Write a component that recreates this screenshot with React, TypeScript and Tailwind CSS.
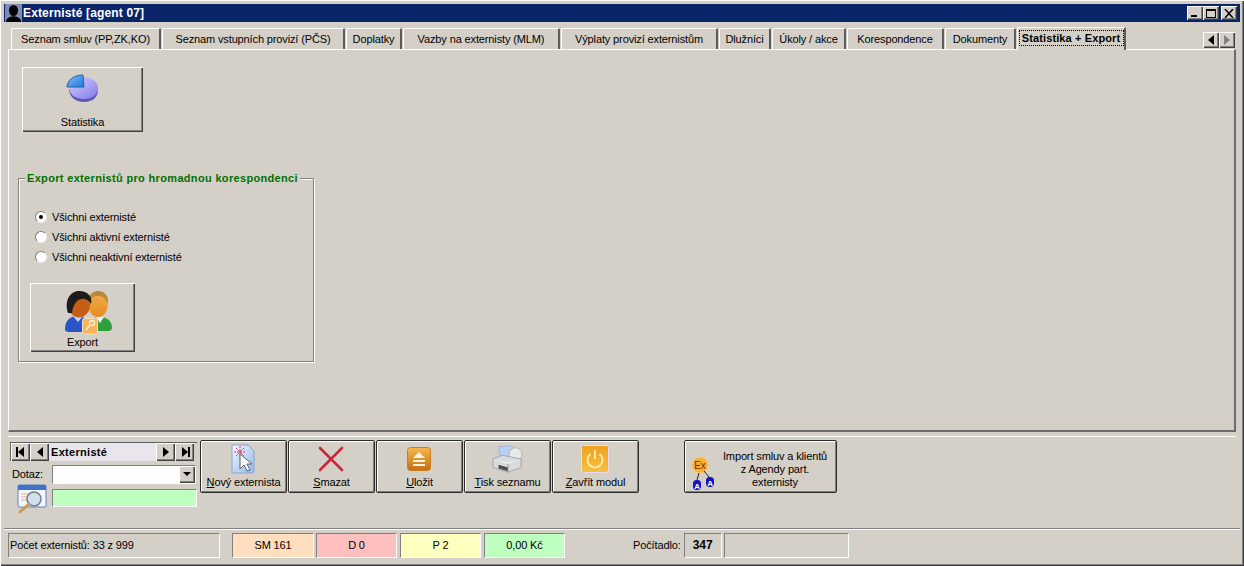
import React from 'react';

const tabs = [
  { label: 'Seznam smluv (PP,ZK,KO)', width: 150 },
  { label: 'Seznam vstupních provizí (PČS)', width: 183 },
  { label: 'Doplatky', width: 56 },
  { label: 'Vazby na externisty (MLM)', width: 157 },
  { label: 'Výplaty provizí externistům', width: 157 },
  { label: 'Dlužníci', width: 52 },
  { label: 'Úkoly / akce', width: 74 },
  { label: 'Korespondence', width: 97 },
  { label: 'Dokumenty', width: 71 },
];

const raised = 'shadow-[inset_1px_1px_0_#ffffff,inset_-1px_-1px_0_#404040,inset_-2px_-2px_0_#808080]';
const sunken = 'border border-t-[#808080] border-l-[#808080] border-b-white border-r-white';

function PieIcon() {
  return (
    <svg width="34" height="30" viewBox="0 0 34 30">
      <defs>
        <linearGradient id="pieA" x1="0" y1="0" x2="1" y2="1">
          <stop offset="0" stopColor="#d8d4ff" />
          <stop offset="1" stopColor="#7f78ea" />
        </linearGradient>
        <linearGradient id="pieB" x1="0" y1="0" x2="1" y2="1">
          <stop offset="0" stopColor="#7cc4f8" />
          <stop offset="1" stopColor="#1f74d8" />
        </linearGradient>
      </defs>
      <path d="M3 15c0 7 6 13 15 13s14-5 14-12c0-7-6-12-14-12l-1 11z" fill="#5c5ab0" />
      <path d="M3 13c0 7 6 12 15 12s14-5 14-11c0-6-6-11-14-11l-2 10z" fill="url(#pieA)" />
      <path d="M1 13C1 7 7 1 17 1l1 12z" fill="url(#pieB)" stroke="#2a5fa8" strokeWidth="1" />
    </svg>
  );
}

function UsersIcon() {
  return (
    <svg width="50" height="44" viewBox="0 0 50 44">
      <defs>
        <linearGradient id="faceA" x1="0" y1="0" x2="0" y2="1">
          <stop offset="0" stopColor="#f0b050" />
          <stop offset="1" stopColor="#e88a20" />
        </linearGradient>
      </defs>
      <path d="M24 38c0-8 4-12 12-12s12 5 12 11c0 2-2 3-4 3H28z" fill="#2f9e3c" />
      <path d="M32 26l4 6 4-6z" fill="#f2f2f2" />
      <ellipse cx="34" cy="13" rx="10" ry="13" fill="url(#faceA)" />
      <path d="M24 13C23 5 28 0 34 0s11 4 10 13c-2-6-6-8-10-8s-8 2-10 8z" fill="#b88a3a" />
      <path d="M1 38c0-8 5-13 12-13s14 5 14 12c0 3-2 4-5 4H5c-3 0-4-1-4-3z" fill="#2a55c8" />
      <path d="M9 25l5 6 5-6z" fill="#c8d8f8" />
      <ellipse cx="15" cy="14" rx="11" ry="12.5" fill="#c45e14" />
      <path d="M4 22C0 10 6 0 15 0s14 6 12 13c-2-4-6-6-10-5-4 1-8 5-9 14z" fill="#1c1c1c" />
      <rect x="18.5" y="27.5" width="15" height="15.5" rx="2" fill="#f6b45c" stroke="#fbe0b8" />
      <circle cx="28" cy="32" r="2.5" fill="none" stroke="#fff3dc" strokeWidth="1.3" />
      <path d="M26 34l-4 5" stroke="#fff3dc" strokeWidth="1.3" />
    </svg>
  );
}

function NewIcon() {
  return (
    <svg width="26" height="32" viewBox="0 0 26 30">
      <defs>
        <linearGradient id="docA" x1="0" y1="0" x2="1" y2="1">
          <stop offset="0" stopColor="#f4f8ff" />
          <stop offset="1" stopColor="#90b8ee" />
        </linearGradient>
      </defs>
      <path d="M2 1h16l6 6v20c0 1-1 2-2 2H2z" fill="url(#docA)" stroke="#86a4d4" />
      <path d="M10 2v12M4 8h12M6 4l8 8M14 4l-8 8" stroke="#d8365a" strokeWidth="1" strokeDasharray="2 1" />
      <path d="M10 10v15l4-4 3 6 3-1-3-6h5z" fill="#ffffff" stroke="#55606e" strokeWidth="1" />
    </svg>
  );
}

function DeleteIcon() {
  return (
    <svg width="26" height="26" viewBox="0 0 26 26">
      <path d="M2 2l22 22M24 2L2 24" stroke="#c8283c" strokeWidth="2.6" strokeLinecap="round" />
    </svg>
  );
}

function SaveIcon() {
  return (
    <svg width="24" height="24" viewBox="0 0 24 24">
      <defs>
        <linearGradient id="saveA" x1="0" y1="0" x2="0" y2="1">
          <stop offset="0" stopColor="#f6b850" />
          <stop offset="1" stopColor="#c86c14" />
        </linearGradient>
      </defs>
      <rect x="0.5" y="0.5" width="23" height="23" rx="3" fill="url(#saveA)" stroke="#c8801e" />
      <path d="M12 5l6 6H6z" fill="#fff4e0" />
      <rect x="6" y="13" width="12" height="2" fill="#fff4e0" />
      <rect x="6" y="17" width="12" height="2" fill="#fff4e0" />
    </svg>
  );
}

function PrinterIcon() {
  return (
    <svg width="32" height="30" viewBox="0 0 34 30">
      <path d="M8 2l14-1 4 12-16 1z" fill="#b8d0f4" stroke="#8ca4c8" strokeWidth="0.6" />
      <circle cx="26" cy="10" r="7" fill="#e8e8e8" stroke="#b0b0b0" />
      <path d="M2 15l10-4 20 4v9l-14 5-16-5z" fill="#d8dadc" stroke="#8c8e92" strokeWidth="0.7" />
      <path d="M2 15l16 5 14-5-14 4z" fill="#ffffff" />
      <path d="M8 21l10 3v4l-10-3z" fill="#4c4e52" />
      <path d="M18 20v9" stroke="#8c8e92" />
    </svg>
  );
}

function PowerIcon() {
  return (
    <svg width="28" height="28" viewBox="0 0 28 28">
      <defs>
        <linearGradient id="powerA" x1="0" y1="0" x2="0" y2="1">
          <stop offset="0" stopColor="#f0a020" />
          <stop offset="1" stopColor="#f8c040" />
        </linearGradient>
      </defs>
      <rect x="0.5" y="0.5" width="27" height="27" rx="2" fill="url(#powerA)" stroke="#e8dcf0" />
      <path d="M9.5 9a7.5 7.5 0 1 0 9 0" fill="none" stroke="#ffe9a8" strokeWidth="2" />
      <path d="M14 5v9" stroke="#ffe9a8" strokeWidth="2" />
    </svg>
  );
}

function ImportIcon() {
  return (
    <svg width="26" height="34" viewBox="0 0 26 34" className="font-['Liberation_Sans',sans-serif]">
      <circle cx="10" cy="9" r="8" fill="#f6b030" stroke="#f8cc80" />
      <text x="10" y="13" textAnchor="middle" fontSize="10" fill="#8c1c10">Ex</text>
      <path d="M9 17l-2 7M14 15l5 6" stroke="#202020" strokeWidth="1" />
      <rect x="3" y="24" width="8" height="10" rx="3.5" fill="#1414c8" />
      <rect x="16" y="21" width="8" height="10" rx="3.5" fill="#1414c8" />
      <text x="7" y="32.5" textAnchor="middle" fontSize="8" fontWeight="700" fill="#fff">A</text>
      <text x="20" y="29.5" textAnchor="middle" fontSize="8" fontWeight="700" fill="#fff">A</text>
    </svg>
  );
}

function SearchIcon() {
  return (
    <svg width="30" height="31" viewBox="0 0 30 31">
      <rect x="1" y="1" width="28" height="22" rx="1" fill="#f4f6fc" stroke="#5c84c4" />
      <rect x="1" y="1" width="28" height="5" fill="#3c74cc" />
      <path d="M4 10h9M4 13h6M4 16h6" stroke="#e8b070" />
      <circle cx="17" cy="15" r="7" fill="#cfe0ec" stroke="#70808c" strokeWidth="1.6" />
      <path d="M12 20l-9 8" stroke="#c89c50" strokeWidth="3" strokeLinecap="round" />
    </svg>
  );
}

function PersonIcon() {
  return (
    <svg width="17" height="18" viewBox="0 0 17 18" className="block">
      <rect width="17" height="18" fill="#7c8cb4" />
      <ellipse cx="8.5" cy="6.5" rx="4.5" ry="5.5" fill="#000" />
      <path d="M1 18c0-4 3-5 7.5-6 4.5 1 7.5 2 7.5 6z" fill="#000" />
    </svg>
  );
}

function Arrow({ dir, bar, fill = '#000000' }: { dir: 'left' | 'right'; bar?: boolean; fill?: string }) {
  return (
    <svg width="12" height="12" viewBox="0 0 12 12">
      {dir === 'left' ? <path d="M9 1v10L3 6z" fill={fill} /> : <path d="M3 1v10l6-5z" fill={fill} />}
      {bar && dir === 'left' && <rect x="1" y="1" width="2" height="10" fill={fill} />}
      {bar && dir === 'right' && <rect x="9" y="1" width="2" height="10" fill={fill} />}
    </svg>
  );
}

function WinButton({ children }: { children: React.ReactNode }) {
  return (
    <div className={`w-[16px] h-[14px] bg-[#d4d0c8] flex items-center justify-center ${raised}`}>
      {children}
    </div>
  );
}

function NavButton({ width, children }: { width: string; children: React.ReactNode }) {
  return <div className={`${width} h-[18px] bg-[#d4d0c8] flex items-center justify-center ${raised}`}>{children}</div>;
}

function ToolButton({ icon, children }: { icon: React.ReactNode; children: React.ReactNode }) {
  return (
    <button className="w-[87px] h-[53px] bg-[#d4d0c8] border border-[#2c2c2c] rounded-[2px] shadow-[inset_1px_1px_0_#ffffff,inset_-1px_-1px_0_#808080] flex flex-col items-center pb-[3px]">
      <div className="h-[38px] pr-[2px] flex items-center justify-center">{icon}</div>
      <div className="mt-auto whitespace-nowrap">{children}</div>
    </button>
  );
}

function Radio({ label, checked }: { label: string; checked?: boolean }) {
  return (
    <div className="h-[20px] flex items-center pl-[5px]">
      <div className="w-[12px] h-[12px] rounded-full bg-white border border-t-[#808080] border-l-[#808080] border-r-[#eeeeee] border-b-[#eeeeee] flex items-center justify-center">
        {checked && <div className="w-[4px] h-[4px] rounded-full bg-black" />}
      </div>
      <span className="ml-[5px]">{label}</span>
    </div>
  );
}

export default function App() {
  return (
    <div className="w-[1244px] h-[566px] bg-[#d4d0c8] flex flex-col p-[4px] text-[11px] leading-[13px] tracking-[-0.13px] text-black overflow-hidden font-['Liberation_Sans',Arial,sans-serif] shadow-[inset_1px_1px_0_#ffffff,inset_-1px_-1px_0_#404040,inset_-2px_-2px_0_#808080]">
      {/* title bar */}
      <div className="h-[18px] bg-[#0a246a] flex items-center pl-[1px] pr-[3px] shrink-0">
        <PersonIcon />
        <span className="ml-[1px] text-white font-bold text-[12px] tracking-[0.15px]">Externisté [agent 07]</span>
        <div className="ml-auto flex">
          <WinButton>
            <div className="w-[6px] h-[2px] bg-black mt-[6px] mr-[2px]" />
          </WinButton>
          <WinButton>
            <div className="w-[10px] h-[9px] border border-black border-t-2" />
          </WinButton>
          <div className="ml-[2px]">
            <WinButton>
              <svg width="10" height="9" viewBox="0 0 10 9">
                <path d="M1 0l8 9M9 0L1 9" stroke="#000" strokeWidth="1.5" />
              </svg>
            </WinButton>
          </div>
        </div>
      </div>

      {/* tabs */}
      <div className="h-[27px] mx-[4px] pl-[3px] flex items-end gap-[1px] shrink-0">
        {tabs.map((tab) => (
          <div
            key={tab.label}
            style={{ width: tab.width }}
            className="h-[21px] flex items-center justify-center whitespace-nowrap rounded-t-[2px] border-t border-l border-white border-r-2 border-r-[#5c5c5c]"
          >
            {tab.label}
          </div>
        ))}
        <div className="w-[109px] h-[23px] -mb-[1px] relative bg-[#d4d0c8] flex items-start justify-center rounded-t-[2px] border-t border-l border-white border-r-2 border-r-[#5c5c5c] pt-[2px]">
          <span className="font-bold leading-[16px] tracking-[0.12px] outline outline-1 outline-dotted outline-black -outline-offset-1 w-[105px] text-center whitespace-nowrap">
            Statistika + Export
          </span>
        </div>
        <div className="ml-auto mr-[1px] mb-[1px] flex">
          <div className={`w-[16px] h-[16px] flex items-center justify-center ${raised}`}>
            <Arrow dir="left" />
          </div>
          <div className={`w-[16px] h-[16px] flex items-center justify-center ${raised}`}>
            <Arrow dir="right" fill="#808080" />
          </div>
        </div>
      </div>

      {/* tab page */}
      <div className="h-[383px] mx-[4px] shrink-0 border-t border-l border-white border-r-2 border-b-2 border-r-[#6c6c6c] border-b-[#6c6c6c] pl-[9px] pt-[17px]">
        <button className={`ml-[4px] w-[121px] h-[65px] flex flex-col items-center pt-[7px] pb-[3px] ${raised}`}>
          <PieIcon />
          <span className="mt-auto">Statistika</span>
        </button>

        <fieldset className="mt-[39px] w-[296px] h-[191px] border border-[#808080] shadow-[1px_1px_0_#ffffff,inset_1px_1px_0_#ffffff] pl-[11px]">
          <legend className="-ml-[5px] px-[2px] bg-[#d4d0c8] font-bold text-[#007000] leading-[14px] tracking-[0.33px]">
            Export externistů pro hromadnou korespondenci
          </legend>
          <div className="pt-[22px]">
            <Radio label="Všichni externisté" checked />
            <Radio label="Všichni aktivní externisté" />
            <Radio label="Všichni neaktivní externisté" />
          </div>
          <button className={`mt-[16px] w-[105px] h-[69px] flex flex-col items-center pt-[8px] pb-[3px] ${raised}`}>
            <div className="ml-[13px]">
              <UsersIcon />
            </div>
            <span className="mt-auto">Export</span>
          </button>
        </fieldset>
      </div>

      {/* toolbar */}
      <div className="h-[92px] mt-[4px] mx-[4px] shrink-0 border-t border-white pl-[2px] pt-[3px] flex items-start">
        <div className="w-[187px] mt-[2px]">
          <div className="flex h-[19px] border-t border-l border-[#606060]">
            <NavButton width="w-[19px]"><Arrow dir="left" bar /></NavButton>
            <NavButton width="w-[19px]"><Arrow dir="left" /></NavButton>
            <div className="w-[107px] bg-[#e8e6ec] font-bold tracking-[0.3px] pl-[2px] flex items-center">Externisté</div>
            <NavButton width="w-[19px]"><Arrow dir="right" /></NavButton>
            <NavButton width="w-[19px]"><Arrow dir="right" bar /></NavButton>
          </div>
          <div className="flex items-center mt-[4px] h-[19px]">
            <span className="w-[42px] pl-[2px]">Dotaz:</span>
            <div className={`w-[144px] h-[19px] bg-white flex justify-end ${sunken}`}>
              <div className={`w-[16px] h-[17px] bg-[#d4d0c8] flex items-center justify-center ${raised}`}>
                <svg width="8" height="5" viewBox="0 0 8 5">
                  <path d="M0 0h8L4 4z" fill="#000" />
                </svg>
              </div>
            </div>
          </div>
          <div className="flex items-start">
            <div className="ml-[7px] w-[30px] h-[31px]">
              <SearchIcon />
            </div>
            <div className={`ml-[5px] mt-[5px] w-[145px] h-[18px] bg-[#bfffbf] ${sunken}`} />
          </div>
        </div>

        <div className="ml-[3px] flex gap-[1px]">
          <ToolButton icon={<NewIcon />}><u>N</u>ový externista</ToolButton>
          <ToolButton icon={<DeleteIcon />}><u>S</u>mazat</ToolButton>
          <ToolButton icon={<SaveIcon />}><u>U</u>ložit</ToolButton>
          <ToolButton icon={<PrinterIcon />}><u>T</u>isk seznamu</ToolButton>
          <ToolButton icon={<PowerIcon />}><u>Z</u>avřít modul</ToolButton>
        </div>

        <button className="ml-[45px] w-[153px] h-[53px] bg-[#d4d0c8] border border-[#2c2c2c] rounded-[2px] shadow-[inset_1px_1px_0_#ffffff,inset_-1px_-1px_0_#808080] flex items-center pl-[5px]">
          <div className="mt-[12px]">
            <ImportIcon />
          </div>
          <div className="ml-[4px] mt-[6px] w-[110px] text-center leading-[13px]">
            Import smluv a klientů
            <br />z Agendy part.
            <br />externisty
          </div>
        </button>
      </div>

      {/* status bar */}
      <div className="flex-1 border-t border-[#808080] shadow-[inset_0_1px_0_#ffffff] pt-[4px] flex items-start">
        <div className={`ml-[4px] w-[212px] h-[25px] pl-[1px] flex items-center ${sunken}`}>Počet externistů: 33 z 999</div>
        <div className={`ml-[12px] w-[82px] h-[25px] bg-[#ffdfbf] flex items-center justify-center ${sunken}`}>SM 161</div>
        <div className={`ml-[2px] w-[81px] h-[25px] bg-[#ffbfbf] flex items-center justify-center ${sunken}`}>D 0</div>
        <div className={`ml-[3px] w-[81px] h-[25px] bg-[#ffffbf] flex items-center justify-center ${sunken}`}>P 2</div>
        <div className={`ml-[3px] w-[81px] h-[25px] bg-[#bfffbf] flex items-center justify-center ${sunken}`}>0,00 Kč</div>
        <div className="ml-[68px] h-[25px] flex items-center">Počítadlo:</div>
        <div className={`ml-[3px] w-[38px] h-[25px] font-bold text-[12px] flex items-center justify-center ${sunken}`}>347</div>
        <div className={`ml-[2px] w-[125px] h-[25px] ${sunken}`} />
      </div>
    </div>
  );
}
